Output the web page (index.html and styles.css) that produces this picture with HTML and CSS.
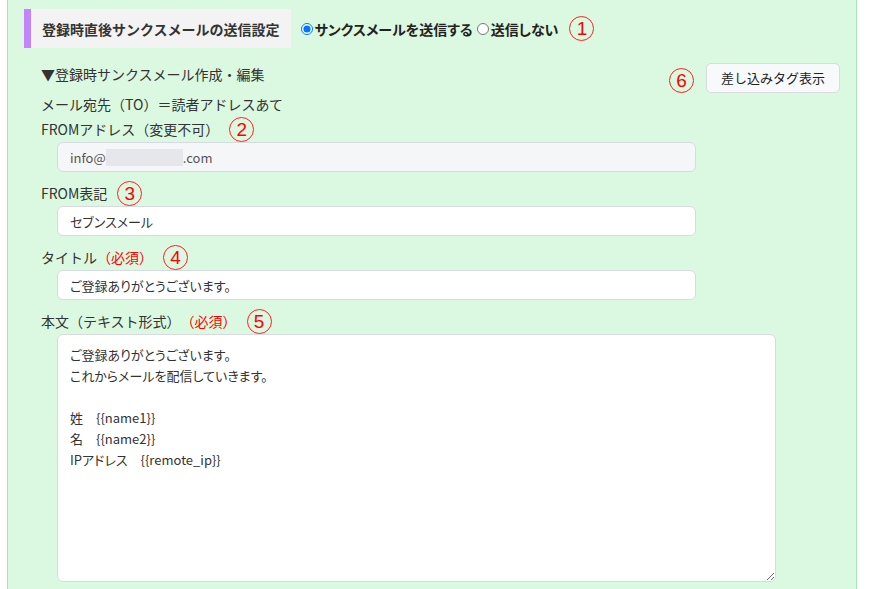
FILE: index.html
```html
<!DOCTYPE html>
<html lang="ja">
<head>
<meta charset="utf-8">
<title>サンクスメール設定</title>
<link rel="stylesheet" href="styles.css">
</head>
<body>
<div class="panel">
  <div class="head-row">
    <div class="heading">登録時直後サンクスメールの送信設定</div>
    <label class="radio"><input type="radio" name="send" checked>サンクスメールを送信する</label>
    <label class="radio"><input type="radio" name="send">送信しない</label>
    <span class="num num-head">1</span>
  </div>
  <div class="editor">
    <div class="title-row">
      <span class="title">▼登録時サンクスメール作成・編集</span>
      <div class="actions">
        <span class="num">6</span>
        <button class="btn" type="button">差し込みタグ表示</button>
      </div>
    </div>
    <div class="line">メール宛先（TO）＝読者アドレスあて</div>
    <div class="label">FROMアドレス（変更不可）<span class="num">2</span></div>
    <div class="field disabled">info@<span class="mask"></span>.com</div>
    <div class="label">FROM表記<span class="num">3</span></div>
    <div class="field">セブンスメール</div>
    <div class="label">タイトル<span class="req">（必須）</span><span class="num">4</span></div>
    <div class="field">ご登録ありがとうございます。</div>
    <div class="label">本文（テキスト形式）<span class="req">（必須）</span><span class="num">5</span></div>
    <textarea class="body-text">ご登録ありがとうございます。
これからメールを配信していきます。

姓　{{name1}}
名　{{name2}}
IPアドレス　{{remote_ip}}</textarea>
  </div>
</div>
</body>
</html>
```

FILE: styles.css
```css
* { box-sizing: border-box; }
html, body { margin: 0; padding: 0; background: #ffffff; }
body {
  font-family: "Noto Sans CJK JP", "Noto Sans", sans-serif;
  color: #333333;
  font-size: 14px;
}
.panel {
  margin-left: 7px;
  width: 850px;
  height: 589px;
  background: #dbf8e0;
  border-left: 1px solid #a9e5b6;
  border-right: 1px solid #a9e5b6;
  padding: 9px 16px 0 16px;
  overflow: hidden;
}
.head-row {
  display: flex;
  align-items: center;
  height: 39px;
}
.heading {
  height: 39px;
  display: flex;
  align-items: center;
  background: #f3f3f3;
  border-left: 7px solid #c285fb;
  padding: 0 11px 0 11px;
  font-weight: bold;
  font-size: 14px;
  color: #333;
}
.radio {
  display: flex;
  align-items: center;
  font-weight: bold;
  font-size: 14px;
  color: #222;
  font-feature-settings: "palt";
}
.radio:first-of-type { margin-left: 10px; }
.radio input {
  margin: 0 2px 0 0;
  width: 12px;
  height: 12px;
}
.radio + .radio input { margin-left: 4px; }
.num {
  display: inline-flex;
  align-items: center;
  justify-content: center;
  width: 25px;
  height: 25px;
  border: 1px solid #f22;
  border-radius: 50%;
  color: #f00;
  font-family: "Liberation Sans", "Noto Sans", sans-serif;
  font-size: 19px;
  line-height: 1;
  margin-left: 10px;
  flex: none;
}
.num-head { margin-left: 11px; }
.editor {
  padding-left: 17px;
  font-feature-settings: "pkna";
}
.title-row {
  display: flex;
  justify-content: space-between;
  align-items: flex-start;
  height: 30px;
  margin-top: 14px;
}
.title {
  line-height: 20px;
  margin-top: 2px;
}
.actions {
  display: flex;
  align-items: center;
}
.actions .num { margin: 6px 12px 0 0; }
.btn {
  height: 30px;
  width: 134px;
  background: #f8f9fa;
  border: 1px solid #d8dbdf;
  border-radius: 5px;
  font-family: inherit;
  font-size: 13px;
  color: #222;
  padding: 0;
}
.line {
  height: 24px;
  line-height: 24px;
}
.label {
  display: flex;
  align-items: center;
  height: 26px;
}
.req { color: #f00; }
.field {
  margin-left: 16px;
  width: 639px;
  height: 30px;
  display: flex;
  align-items: center;
  background: #ffffff;
  border: 1px solid #d7dbe0;
  border-radius: 6px;
  padding: 0 12px;
  font-size: 13px;
  color: #333;
  margin-bottom: 8px;
  font-feature-settings: "palt";
}
.field.disabled { background: #f5f6f8; color: #555; }
.mask {
  display: inline-block;
  width: 77px;
  height: 17px;
  background: #e5e7ea;
}
.body-text {
  display: block;
  margin: 0 0 0 16px;
  width: 719px;
  height: 248px;
  background: #ffffff;
  border: 1px solid #d7dbe0;
  border-radius: 6px;
  padding: 9px 12px;
  font-family: "Noto Sans CJK JP", "Noto Sans", sans-serif;
  font-feature-settings: "palt";
  font-size: 13px;
  line-height: 21px;
  color: #333;
  resize: both;
}
```
